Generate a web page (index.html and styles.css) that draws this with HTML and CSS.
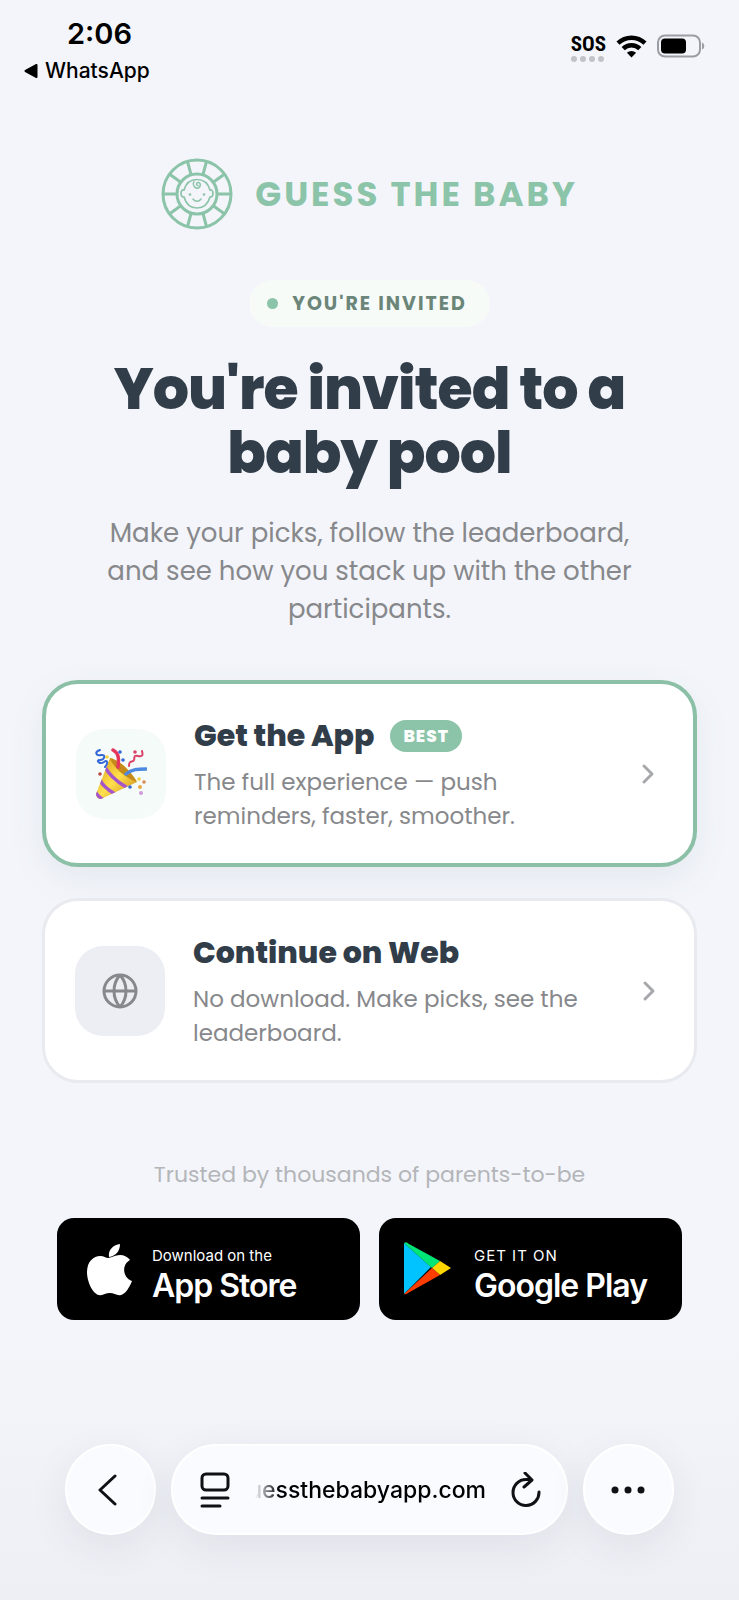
FILE: index.html
```html
<!DOCTYPE html>
<html lang="en">
<head>
	<meta charset="utf-8">
	<meta name="viewport" content="width=device-width, initial-scale=1">
	<title>Guess the Baby</title>
	<link rel="stylesheet" href="styles.css">
</head>
<body>
	<header class="status">
		<div class="status-left">
			<time class="clock">2:06</time>
			<a class="back-app" href="#"><svg width="14" height="14" viewBox="0 0 14 14"><path d="M12.500 1v12L1.500 7z" stroke="#000" stroke-width="2" stroke-linejoin="round"/></svg>WhatsApp</a>
		</div>
		<div class="status-right">
			<div class="signal">
				<span class="sos">SOS</span>
				<svg width="34" height="6" viewBox="0 0 34 6" fill="#c2c3c8"><circle cx="3" cy="3" r="3"/><circle cx="12" cy="3" r="3"/><circle cx="21" cy="3" r="3"/><circle cx="30" cy="3" r="3"/></svg>
			</div>
			<svg width="31" height="24" viewBox="0 0 31 24" fill="none" stroke="#000" stroke-width="4.500"><path d="M2 9.200a19.500 19.500 0 0 1 27 0"/><path d="M7.200 14.600a12 12 0 0 1 16.600 0"/><path d="M15.500 23.500l-4.600-4.700a6.500 6.500 0 0 1 9.200 0z" fill="#000" stroke="none"/></svg>
			<svg class="battery" width="48" height="24" viewBox="0 0 48 24"><rect x="1" y="1.500" width="42" height="21" rx="7" fill="none" stroke="#9c9da2" stroke-width="2"/><rect x="4" y="4.500" width="25" height="15" rx="4"/><path d="M45 8.500c3 1 3 6 0 7z" fill="#9c9da2"/></svg>
		</div>
	</header>

	<main class="page">
		<div class="logo">
			<svg width="72" height="72" viewBox="0 0 72 72" fill="none" stroke="#8bc4a8" stroke-width="3">
				<circle cx="36" cy="36" r="34"/>
				<circle cx="36" cy="36" r="20"/>
				<path d="M56 36h14M2 36h14M52.200 47.800l11.500 8.200M8.300 16l11.500 8.200M52.200 24.200L63.700 16M8.300 56l11.500-8.200M42 55.500l3.500 13.200M26.500 3.300L30 16.500M42 16.500l3.500-13.200M30 55.500l-3.500 13.200"/>
				<path d="M23 32c2-7 7-10.500 13-10.500S47 25 49 32c4-1 4 7 0 7-2 7-7 11-13 11s-11-4-13-11c-4 0-4-8 0-7z" stroke-width="1.700"/>
				<path d="M33 23c-2 4 1 8 4 7s3-6 0-5.500c-2 .5-2 3 0 3M32 41c2 3 6 3 8 0" stroke-width="1.500" stroke-linecap="round"/>
				<circle cx="29" cy="36.500" r="1.300" fill="#8bc4a8" stroke="none"/>
				<circle cx="43" cy="36.500" r="1.300" fill="#8bc4a8" stroke="none"/>
			</svg>
			<span class="logo-text">GUESS THE BABY</span>
		</div>

		<div class="pill"><span class="dot"></span>YOU'RE INVITED</div>

		<h1>You're invited to a baby pool</h1>
		<p class="lead">Make your picks, follow the leaderboard, and see how you stack up with the other participants.</p>

		<div class="options">
			<a class="card card-best" href="#">
				<span class="tile tile-green">
					<svg width="52" height="52" viewBox="0 0 52 52" fill="none" stroke-linecap="round">
						<defs>
							<linearGradient id="gold" x1="0" y1="0" x2="1" y2="1">
								<stop offset="0" stop-color="#d99413"/>
								<stop offset=".5" stop-color="#ffe04d"/>
								<stop offset="1" stop-color="#c98212"/>
							</linearGradient>
							<clipPath id="cone"><path d="M15 10C24 12 35 22 42 34L6 51Q1 51 1 46z"/></clipPath>
						</defs>
						<path d="M15 10C24 12 35 22 42 34L6 51Q1 51 1 46z" fill="url(#gold)"/>
						<g clip-path="url(#cone)" stroke="#a555c9" stroke-width="3.500">
							<path d="M10 19c4 8 11 14 21 20"/>
							<path d="M5 32c3 6 8 10 15 14"/>
							<path d="M0 43c2 5 5 7 9 9"/>
						</g>
						<path d="M15 10C24 12 35 22 42 34c-10-3-24-14-27-24z" fill="#c58a1a"/>
						<path d="M5 2C-1 4 1 8 6 7s4 5-1 5 0 5 4 2 4 2 1 5" stroke="#3467d6" stroke-width="2"/>
						<path d="M18 2c6 3 6 9 5 17" stroke="#e5355b" stroke-width="3.500"/>
						<path d="M34 18c0-7 4-3 5-6s-1-5 4-4 5-1 4-5" stroke="#dc4168" stroke-width="2"/>
						<path d="M31 26c6-5 12-5 20-5" stroke="#4b8ae0" stroke-width="3.500"/>
						<g stroke="none">
							<circle cx="25" cy="4" r="1.800" fill="#3467d6"/>
							<circle cx="28" cy="12" r="1.800" fill="#3467d6"/>
							<circle cx="12" cy="9" r="1.800" fill="#f4d13a"/>
							<circle cx="40" cy="4" r="1.800" fill="#dc4168"/>
							<circle cx="5" cy="26" r="1.800" fill="#b84848"/>
							<circle cx="44" cy="31" r="1.800" fill="#f4d13a"/>
							<circle cx="49" cy="34" r="1.800" fill="#d98b57"/>
							<circle cx="35" cy="39" r="1.800" fill="#3467d6"/>
							<circle cx="45" cy="39" r="2" fill="#e9a844"/>
							<circle cx="46" cy="45" r="2" fill="#cf9bdb"/>
						</g>
					</svg>
				</span>
				<span class="card-body">
					<span class="card-title">Get the App <span class="badge">BEST</span></span>
					<span class="card-text">The full experience — push reminders, faster, smoother.</span>
				</span>
				<svg class="chevron" width="30" height="30" viewBox="0 0 30 30"><path d="M11 7l8 8-8 8"/></svg>
			</a>

			<a class="card" href="#">
				<span class="tile">
					<svg width="36" height="36" viewBox="0 0 36 36" fill="none" stroke="#87888b" stroke-width="3"><circle cx="18" cy="18" r="16"/><path d="M2 18h32M18 2c-8 9-8 23 0 32M18 2c8 9 8 23 0 32"/></svg>
				</span>
				<span class="card-body">
					<span class="card-title">Continue on Web</span>
					<span class="card-text">No download. Make picks, see the leaderboard.</span>
				</span>
				<svg class="chevron" width="30" height="30" viewBox="0 0 30 30"><path d="M11 7l8 8-8 8"/></svg>
			</a>
		</div>

		<p class="trusted">Trusted by thousands of parents-to-be</p>
		<div class="stores">
			<a class="store" href="#">
				<svg width="52" height="54" viewBox="-3 -2 52 54" fill="#fff"><path d="M25 14c3 0 7-3 12-3 4 0 8 2 10 5-9 5-7 18 2 21-2 5-6 13-11 14-4 1-7-2-11-2-5 0-7 3-11 2C10 50 4 38 4 28c0-11 7-16 13-16 4 0 6 2 8 2zM26 13c-1-7 4-12 11-13 0 7-4 12-11 13z"/></svg>
				<span class="store-text"><small>Download on the</small><strong>App Store</strong></span>
			</a>
			<a class="store" href="#">
				<svg width="52" height="54" viewBox="0 0 52 54"><path d="M2 1v51l27-27z" fill="#00c3ff"/><path d="M2 1q2-2 5 1l31 17-8 7z" fill="#00e676"/><path d="M38 19l11 7-11 7-8-7z" fill="#ffd600"/><path d="M2 52l28-26 8 7L6 51q-2 2-4 1z" fill="#ff3d00"/></svg>
				<span class="store-text"><small class="caps">GET IT ON</small><strong>Google Play</strong></span>
			</a>
		</div>
	</main>

	<nav class="toolbar">
		<button class="round" type="button" aria-label="Back"><svg width="32" height="32" viewBox="0 0 32 32"><path d="M20 2L5 16l15 14"/></svg></button>
		<div class="address">
			<button class="tool" type="button" aria-label="Page menu"><svg width="32" height="36" viewBox="0 0 32 36"><rect x="3" y="2" width="26" height="16" rx="4"/><path d="M3 26h26M3 34h18"/></svg></button>
			<input class="url" type="text" dir="rtl" aria-label="Address" value="guessthebabyapp.com">
			<button class="tool" type="button" aria-label="Reload"><svg width="32" height="36" viewBox="0 0 32 36"><path d="M20 7.500h-4A13 13 0 1 0 29 20M15 1l7 7-8 7"/></svg></button>
		</div>
		<button class="round" type="button" aria-label="More"><svg width="36" height="8" viewBox="0 0 36 8"><g fill="#101114" stroke="none"><circle cx="4" cy="4" r="3.500"/><circle cx="17" cy="4" r="3.500"/><circle cx="30" cy="4" r="3.500"/></g></svg></button>
	</nav>
</body>
</html>
```

FILE: styles.css
```css
* {
	box-sizing: border-box;
}
body {
	margin: 0;
	min-height: 100vh;
	display: flex;
	flex-direction: column;
	background: linear-gradient(#f3f5fa, #f3f5fa 84%, #eeeff5);
	color: #323d4a;
	font-family: Poppins, Inter, sans-serif;
}
a {
	color: inherit;
	text-decoration: none;
}
svg {
	display: block;
	flex: none;
}

/* status bar */
.status {
	display: flex;
	justify-content: space-between;
	padding: 16px 34px 0 24px;
	color: #000;
	font-family: Inter, sans-serif;
}
.status-left {
	display: flex;
	flex-direction: column;
}
.clock {
	padding-left: 43px;
	font-size: 29px;
	line-height: 36px;
	font-weight: 600;
}
.back-app {
	display: flex;
	align-items: center;
	gap: 7px;
	font-size: 21px;
	line-height: 38px;
	font-weight: 500;
}
.status-right {
	display: flex;
	align-items: flex-start;
	gap: 10px;
	padding-top: 18px;
}
.signal {
	display: flex;
	flex-direction: column;
	align-items: center;
	gap: 2px;
}
.sos {
	font-family: "Roboto Condensed", "Liberation Sans Narrow", Roboto, sans-serif;
	font-size: 21px;
	line-height: 20px;
	font-weight: 700;
}

/* page */
.page {
	display: flex;
	flex-direction: column;
	align-items: center;
	padding: 68px 42px 40px;
}
.logo {
	display: flex;
	align-items: center;
	gap: 22px;
	color: #8bc4a8;
}
.logo-text {
	font-size: 34px;
	line-height: 40px;
	font-weight: 700;
	letter-spacing: 3px;
}
.pill {
	display: flex;
	align-items: center;
	gap: 14px;
	margin-top: 50px;
	padding: 0 23px 0 18px;
	border-radius: 24px;
	background: #f6fbf8;
	color: #6b8578;
	font-size: 19px;
	line-height: 47px;
	font-weight: 700;
	letter-spacing: 2px;
}
.dot {
	width: 11px;
	height: 11px;
	border-radius: 50%;
	background: #8bc4a8;
}
h1 {
	max-width: 560px;
	margin: 30px 0 0;
	text-align: center;
	font-size: 57px;
	line-height: 64px;
	font-weight: 800;
	letter-spacing: -1px;
}
.lead {
	max-width: 560px;
	margin: 29px 0 0;
	text-align: center;
	color: #87888b;
	font-size: 26px;
	line-height: 38px;
}

/* option cards */
.options {
	display: flex;
	flex-direction: column;
	gap: 31px;
	width: 100%;
	margin-top: 52px;
}
.card {
	display: flex;
	align-items: center;
	gap: 28px;
	padding: 30px;
	border: 3px solid #e9eaef;
	border-radius: 36px;
	background: #fff;
}
.card-best {
	border: 4px solid #8bc0a7;
	box-shadow: 0 12px 36px rgba(60, 100, 110, 0.08);
}
.tile {
	display: flex;
	flex: none;
	align-items: center;
	justify-content: center;
	width: 90px;
	height: 90px;
	border-radius: 28px;
	background: #edeef4;
}
.tile-green {
	background: #f5fbf8;
}
.card-body {
	display: flex;
	flex: 1;
	flex-direction: column;
	gap: 8px;
}
.card-title {
	display: flex;
	align-items: center;
	gap: 16px;
	font-size: 30px;
	line-height: 43px;
	font-weight: 800;
}
.badge {
	padding: 0 13px;
	border-radius: 16px;
	background: #8bc4a8;
	color: #fff;
	font-size: 17px;
	line-height: 32px;
	letter-spacing: 1px;
}
.card-text {
	max-width: 390px;
	color: #87888b;
	font-size: 23px;
	line-height: 34px;
}
.chevron {
	fill: none;
	stroke: #a7a8ab;
	stroke-width: 3;
	stroke-linecap: round;
	stroke-linejoin: round;
}

/* store badges */
.trusted {
	margin: 75px 0 26px;
	color: #b4b5b9;
	font-size: 22px;
	line-height: 34px;
}
.stores {
	display: grid;
	grid-template-columns: 1fr 1fr;
	gap: 19px;
	width: 100%;
	padding: 0 15px;
}
.store {
	display: flex;
	align-items: center;
	gap: 20px;
	height: 102px;
	padding: 0 23px;
	border-radius: 17px;
	background: #000;
	color: #fff;
	font-family: Inter, sans-serif;
}
.store-text {
	display: flex;
	flex-direction: column;
	padding-top: 12px;
	white-space: nowrap;
}
.store small {
	font-size: 15px;
	line-height: 22px;
}
.store .caps {
	letter-spacing: 1px;
}
.store strong {
	font-size: 32px;
	line-height: 38px;
	font-weight: 600;
	letter-spacing: -1px;
}

/* browser toolbar */
.toolbar {
	display: flex;
	gap: 15px;
	margin-top: auto;
	padding: 0 65px 65px;
}
.toolbar button {
	display: flex;
	flex: none;
	align-items: center;
	justify-content: center;
	padding: 0;
	border: 0;
	background: none;
}
.toolbar svg {
	fill: none;
	stroke: #101114;
	stroke-width: 3;
	stroke-linecap: round;
	stroke-linejoin: round;
}
.toolbar .round,
.address {
	height: 91px;
	border: 2px solid #fff;
	border-radius: 46px;
	background: #fafbff;
	box-shadow: 0 12px 40px rgba(40, 45, 60, 0.08);
}
.toolbar .round {
	width: 91px;
}
.address {
	display: flex;
	flex: 1;
	align-items: center;
	gap: 24px;
	min-width: 0;
	padding: 0 24px 0 26px;
}
.url {
	flex: 1;
	min-width: 0;
	padding: 0;
	border: 0;
	background: none;
	color: #000;
	font-family: Inter, sans-serif;
	font-size: 23px;
	line-height: 32px;
	font-weight: 500;
	mask-image: linear-gradient(to right, transparent, #000 24px);
}
```
